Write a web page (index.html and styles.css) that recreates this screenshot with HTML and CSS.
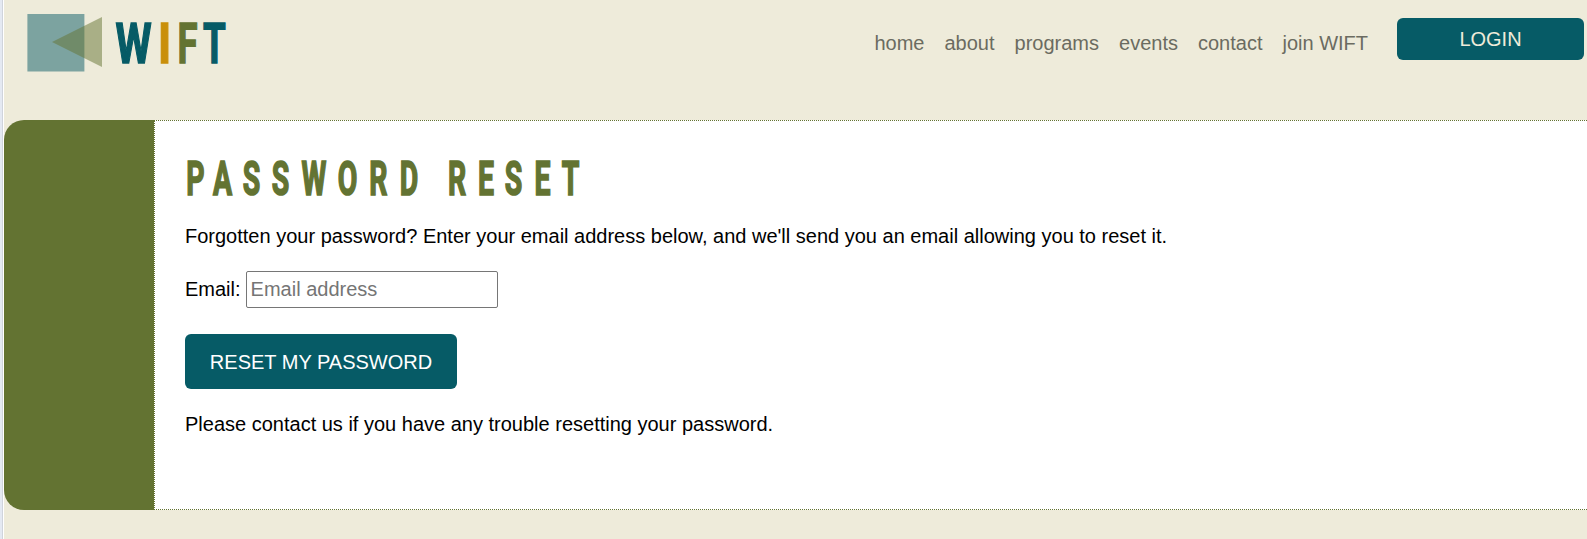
FILE: index.html
```html
<!DOCTYPE html>
<html lang="en">
<head>
<meta charset="utf-8">
<title>WIFT - Password Reset</title>
<link rel="stylesheet" href="styles.css">
</head>
<body>
<div class="page">
  <header class="header">
    <svg class="logo" width="210" height="90" viewBox="24 0 210 90" role="img" aria-label="WIFT">
      <rect x="27.4" y="14" width="57" height="57.5" fill="#7ca3a0"/>
      <path d="M52 42 102 17V67Z" fill="#637332" fill-opacity=".5"/>
      <g class="logo-text">
        <text class="teal" transform="translate(133.5 63) scale(.735 1)">W</text>
        <text class="gold" transform="translate(164.5 63) scale(.8 1)">I</text>
        <text class="olive" transform="translate(187.5 63) scale(.65 1)">F</text>
        <text class="teal" transform="translate(214.5 63) scale(.655 1)">T</text>
      </g>
    </svg>
    <nav class="nav">
      <a>home</a><a>about</a><a>programs</a><a>events</a><a>contact</a><a>join WIFT</a>
    </nav>
    <a class="login">LOGIN</a>
  </header>
  <main class="main">
    <div class="sidebar"></div>
    <section class="content">
      <h1 class="title">
        <svg width="410" height="70" viewBox="185 144 410 70">
          <g transform="scale(.6 1)">
            <text class="title-text" y="195.5" x="325.8 370.8 419.2 467.5 523.3 579.2 630.8 681.7 720 761.7 810 855.8 904.2 950.8">PASSWORD RESET</text>
          </g>
        </svg>
      </h1>
      <p class="text">Forgotten your password? Enter your email address below, and we'll send you an email allowing you to reset it.</p>
      <form class="form">
        <label class="field">Email: <input class="input" type="email" placeholder="Email address"></label>
        <button class="reset" type="button">RESET MY PASSWORD</button>
      </form>
      <p class="text">Please contact us if you have any trouble resetting your password.</p>
    </section>
  </main>
</div>
</body>
</html>
```
FILE: styles.css
```css
* { box-sizing: border-box; }
body {
  margin: 0;
  height: 539px;
  overflow: hidden;
  display: flex;
  background: #e4e9f2;
  font: 20px/23px "Liberation Sans", Arial, sans-serif;
  color: #000;
}
.page {
  flex: 1;
  margin-left: 2px;
  border-left: 1px solid #d0d4dc;
  box-shadow: inset 1px 0 #fff;
  padding-left: 1px;
  background: #eeebda;
}
.header {
  height: 120px;
  display: flex;
  align-items: flex-start;
  padding: 0 3px 0 20px;
}
.logo { display: block; }
.logo-text {
  font: 700 56.2px Roboto, sans-serif;
  text-anchor: middle;
  stroke-width: 1.4px;
}
.teal { fill: #065b66; stroke: #065b66; }
.gold { fill: #c98f0a; stroke: #c98f0a; }
.olive { fill: #637332; stroke: #637332; }
.nav {
  margin: 32px 29px 0 auto;
  display: flex;
  gap: 20px;
  color: #6b6b61;
}
.login {
  width: 187px;
  height: 42px;
  margin-top: 18px;
  border-radius: 6px;
  background: #065b66;
  color: #eeebda;
  line-height: 42px;
  text-align: center;
}
.main { display: flex; height: 390px; }
.sidebar {
  width: 150px;
  background: #637332;
  border-radius: 20px 0 0 20px;
}
.content {
  flex: 1;
  padding: 23px 0 0 30px;
  background: #fff;
  border: 1px dotted #637332;
  border-right: 0;
}
.title { margin: 0 0 11px; height: 70px; }
.title svg { display: block; }
.title-text {
  font: 700 47.4px Roboto, sans-serif;
  text-anchor: middle;
  fill: #637332;
  stroke: #637332;
  stroke-width: 1.7px;
}
.text { margin: 0; }
.form {
  display: flex;
  flex-direction: column;
  align-items: flex-start;
  margin: 23px 0 24px;
}
.field { display: flex; align-items: center; gap: 5px; }
.input {
  width: 252px;
  height: 37px;
  padding: 1px 4px;
  border: 1px solid #767676;
  border-radius: 2px;
  font: inherit;
}
.input::placeholder { color: #757575; }
.reset {
  width: 272px;
  height: 55px;
  margin: 26px 0 0;
  padding: 1px 0 0;
  border: 0;
  border-radius: 6px;
  background: #065b66;
  color: #fff;
  font: inherit;
}
```
